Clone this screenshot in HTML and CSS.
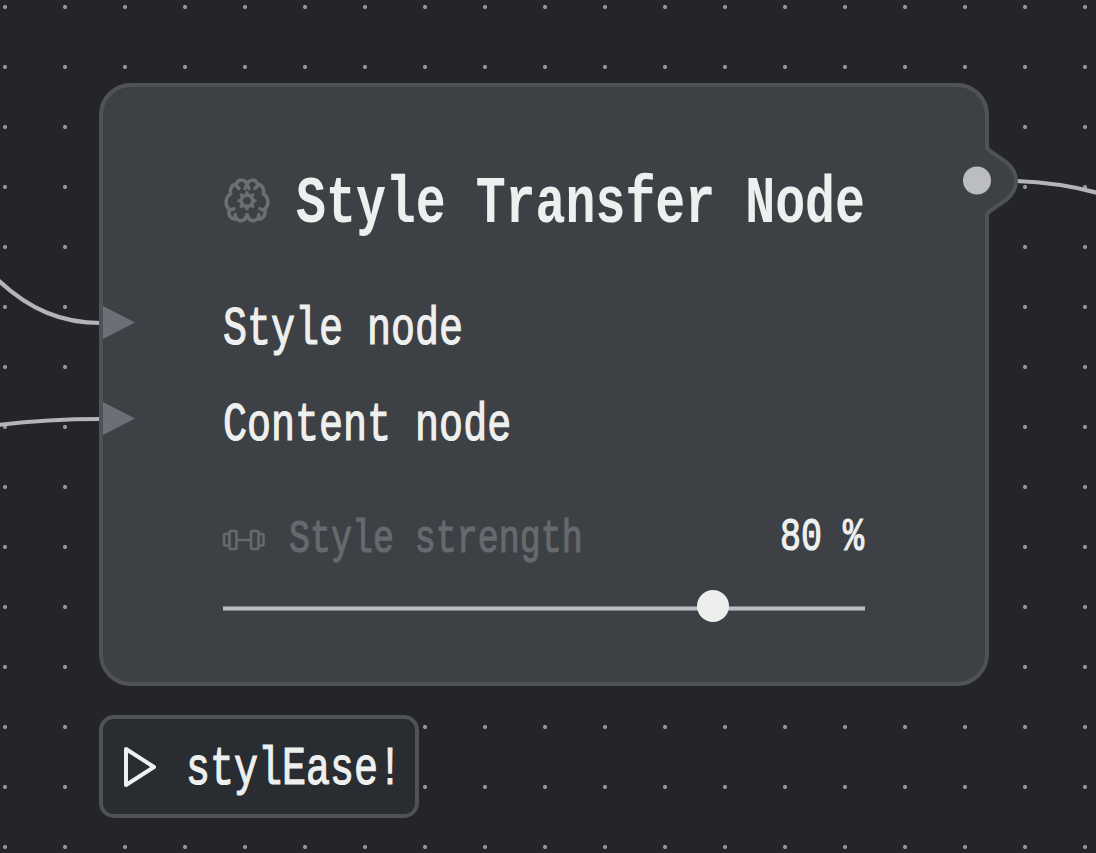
FILE: index.html
```html
<!DOCTYPE html>
<html lang="en">
<head>
<meta charset="utf-8">
<title>Style Transfer Node</title>
<link rel="stylesheet" href="styles.css">
</head>
<body>
<main class="canvas">
  <svg class="wires" viewBox="0 0 1096 853" aria-hidden="true">
    <path d="M-2 280C30 310 62 323 101 323"/>
    <path d="M-2 425C30 421 65 419 101 419"/>
    <path d="M1016 181C1045 182 1072 186 1098 193"/>
  </svg>
  <section class="node">
    <svg class="output" viewBox="0 0 64 80" aria-hidden="true">
      <path class="output-fill" d="M24 5H31Q31 8 34 10L50 21Q60 29 60 40Q60 51 50 59L34 70Q31 72 31 75H24Z"/>
      <path class="output-edge" d="M31 5Q31 8 34 10L50 21Q60 29 60 40Q60 51 50 59L34 70Q31 72 31 75"/>
      <circle cx="21" cy="39.5" r="14"/>
    </svg>
    <header class="title-row">
      <svg class="brain" viewBox="0 0 192 180" aria-hidden="true">
        <path d="M96 44C91 27 70 25 64 43Q64 51 72 55M64 43C51 44 43 56 47 72C30 80 29 109 44 118Q50 121 57 116M44 118C36 136 51 151 66 147C78 158 93 150 96 134"/>
        <path d="M96 44C101 27 122 25 128 43Q128 51 120 55M128 43C141 44 149 56 145 72C162 80 163 109 148 118Q142 121 135 116M148 118C156 136 141 151 126 147C114 158 99 150 96 134M96 42L90 56M96 42L102 56M66 147Q59 142 61 134M126 147Q133 142 131 134"/>
        <circle cx="96" cy="92" r="17"/>
        <path d="M96 75V68M96 109V116M79 92H72M113 92H120M84 80L79 75M108 80L113 75M84 104L79 109M108 104L113 109"/>
      </svg>
      <h1 class="title"><span class="mono">Style Transfer Node</span></h1>
    </header>
    <div class="inputs">
      <div class="input-row"><i class="port"></i><span class="mono">Style node</span></div>
      <div class="input-row"><i class="port"></i><span class="mono">Content node</span></div>
    </div>
    <div class="strength">
      <svg class="dumbbell" viewBox="0 0 42 20" aria-hidden="true">
        <rect x="6.5" y="1" width="7" height="18" rx="1.5"/>
        <rect x="28" y="1" width="7.5" height="18" rx="1.5"/>
        <path d="M13.5 10H28M6.5 4H2.5Q1 4 1 5.5V14Q1 15.5 2.5 15.5H6.5M35.5 4H39Q40.5 4 40.5 5.5V14Q40.5 15.5 39 15.5H35.5"/>
      </svg>
      <span class="label"><span class="mono">Style strength</span></span>
      <span class="value"><span class="mono">80 %</span></span>
    </div>
    <div class="slider"><i class="thumb"></i></div>
  </section>
  <button class="run" type="button">
    <svg class="play" viewBox="0 0 36 44" aria-hidden="true"><path d="M4 4V40L32 22Z"/></svg>
    <span class="mono">stylEase!</span>
  </button>
</main>
</body>
</html>
```

FILE: styles.css
```css
* { box-sizing: border-box; }
body { margin: 0; background: #242529; }
.canvas {
  position: relative;
  width: 1096px;
  height: 853px;
  padding: 83px 0 0 99px;
  overflow: hidden;
  background: radial-gradient(circle at 5px 7px, #94959a 1.6px, transparent 2.4px) 0 0 / 60px 60px #242529;
  color: #eef0ef;
  font-family: "Liberation Mono", monospace;
}
.wires { position: absolute; left: 0; top: 0; width: 1096px; height: 853px; }
.wires path { fill: none; stroke: #b4b4b9; stroke-width: 4.2; }
.mono {
  display: inline-block;
  white-space: pre;
  transform: scaleX(.755);
  transform-origin: left center;
  -webkit-text-stroke: 1.2px currentColor;
}
.node {
  position: relative;
  width: 890px;
  height: 603px;
  padding-top: 77px;
  border: 4px solid #505257;
  border-radius: 32px;
  background: #3d4044;
}
.output { position: absolute; left: 853px; top: 53.5px; width: 64px; height: 80px; }
.output-fill { fill: #3d4044; }
.output-edge { fill: none; stroke: #505257; stroke-width: 4; }
.output circle { fill: #bcbdc1; }
.title-row { display: flex; height: 80px; padding-left: 112px; }
.brain {
  width: 64px;
  height: 60px;
  margin-top: 6px;
  fill: none;
  stroke: #6b6e73;
  stroke-width: 10.5;
  stroke-linecap: round;
  stroke-linejoin: round;
}
.title { width: 570px; margin: 0 0 0 17px; font-size: 66.1px; line-height: 81px; font-weight: 700; }
.title .mono { -webkit-text-stroke-width: 0; }
.inputs { margin-top: 38px; }
.input-row { display: flex; height: 96px; font-size: 53px; line-height: 97px; }
.port {
  width: 32px;
  height: 33px;
  margin: 24px 88px 0 0;
  background: #6b6f76;
  clip-path: polygon(0 0, 100% 50%, 0 100%);
}
.strength {
  display: flex;
  width: 762px;
  height: 56px;
  margin-top: 38px;
  padding-left: 120px;
  font-size: 46.3px;
  line-height: 56px;
}
.dumbbell { width: 42px; height: 20px; margin-top: 18px; fill: none; stroke: #66696e; stroke-width: 2.6; overflow: visible; }
.label { width: 294px; margin-left: 24px; color: #66696e; }
.value { width: 84px; margin: -2px 1px 0 auto; }
.slider {
  width: 642px;
  height: 5px;
  margin: 38px 0 0 120px;
  border: solid #808287;
  border-width: 1px 0;
  background: #bcbec3;
}
.thumb { display: block; width: 32px; height: 32px; margin: -17px 0 0 474px; border-radius: 50%; background: #edefee; }
.run {
  display: flex;
  width: 320px;
  height: 103px;
  margin-top: 29px;
  padding: 0 0 0 18px;
  border: 4px solid #505257;
  border-radius: 15px;
  background: #292c30;
  color: inherit;
  font: 53px/102px "Liberation Mono", monospace;
  text-align: left;
}
.run .mono { height: 95px; transform-origin: left top; }
.play { flex: none; width: 36px; height: 44px; margin: 26px 28px 0 1px; fill: none; stroke: #eef0ef; stroke-width: 4; stroke-linejoin: round; }
```
